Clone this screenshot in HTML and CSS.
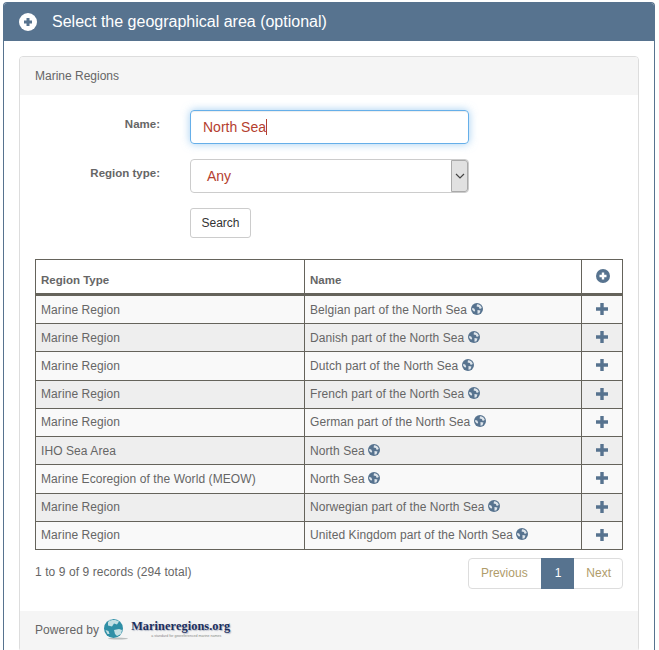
FILE: index.html
```html
<!DOCTYPE html>
<html lang="en">
<head>
  <meta charset="UTF-8" />
  <title>Select the geographical area</title>
  <link rel="stylesheet" href="styles.css">
</head>
<body>

<div class="panel">
  <div class="panel-title">
    <svg class="title-icon" viewBox="0 0 18 18"><circle cx="9" cy="9" r="9" fill="#fff"/><path d="M9 5v8M5 9h8" stroke="#57738f" stroke-width="3"/></svg>
    <span>Select the geographical area (optional)</span>
  </div>

  <div class="panel-body">
    <div class="card">
      <div class="card-heading">Marine Regions</div>

      <div class="card-body">
        <div class="form-row">
          <label class="form-label">Name:</label>
          <div class="fake-input focused">North Sea<span class="caret"></span></div>
        </div>
        <div class="form-row">
          <label class="form-label">Region type:</label>
          <div class="fake-select">
            <span class="select-value">Any</span>
            <span class="select-arrow">
              <svg viewBox="0 0 10 6" width="10" height="6"><path d="M1 1l4 4 4-4" fill="none" stroke="#444" stroke-width="1.2"/></svg>
            </span>
          </div>
        </div>
        <div class="form-row last">
          <span class="form-label"></span>
          <button class="btn">Search</button>
        </div>

        <table class="results">
          <thead>
            <tr>
              <th class="col-type">Region Type</th>
              <th class="col-name">Name</th>
              <th class="col-add">
                <svg class="add-all" viewBox="0 0 14 14"><circle cx="7" cy="7" r="7" fill="#57738f"/><path d="M7 3.5v7M3.5 7h7" stroke="#fff" stroke-width="2.4"/></svg>
              </th>
            </tr>
          </thead>
          <tbody id="rows"></tbody>
        </table>

        <div class="table-foot">
          <div class="records">1 to 9 of 9 records (294 total)</div>
          <div class="pager">
            <a class="page first">Previous</a>
            <a class="page active">1</a>
            <a class="page last">Next</a>
          </div>
        </div>
      </div>

      <div class="card-foot">
        <span>Powered by</span>
        <svg class="globe" viewBox="0 0 24 21">
          <ellipse cx="14" cy="19.6" rx="10" ry="1" fill="#b9bdbd"/>
          <circle cx="9.5" cy="9.5" r="9.5" fill="#2f8fa6"/>
          <path d="M4 3c3-2.4 8-2.6 11-.4l-2 3-3-1-2 3-4-1zM10 11l5-1 3 1-1 4-4 2-2-2zM1.500 11l3 1 1 3-2 0z" fill="#c4e0e4"/>
          <path d="M3 2.500a9.500 9.500 0 0 1 6.500-2.500c-3 1-5 2-6.500 2.500z" fill="#eaf5f6"/>
        </svg>
        <div class="logo">
          <span class="logo-name">Marineregions.org</span>
          <span class="logo-sub">a standard for georeferenced marine names</span>
        </div>
      </div>
    </div>
  </div>
</div>

<script>
  let regions = [
    ["Marine Region", "Belgian part of the North Sea"],
    ["Marine Region", "Danish part of the North Sea"],
    ["Marine Region", "Dutch part of the North Sea"],
    ["Marine Region", "French part of the North Sea"],
    ["Marine Region", "German part of the North Sea"],
    ["IHO Sea Area", "North Sea"],
    ["Marine Ecoregion of the World (MEOW)", "North Sea"],
    ["Marine Region", "Norwegian part of the North Sea"],
    ["Marine Region", "United Kingdom part of the North Sea"]
  ];

  let globe = '<svg class="globe-small" viewBox="0 0 12 12"><circle cx="6" cy="6" r="6" fill="#57738f"/><path d="M6 1.200c2.400 0 4.400 1.600 4.800 3.800L8.800 6 7.800 4 5.600 3.600zM6.500 7l3 .4-1 2.800-2 .6zM1.200 5l2 .6 1 2-1 1.200-2-2z" fill="#dfe6ec"/></svg>';
  let plus = '<svg class="plus" viewBox="0 0 12 12"><path d="M6 0v12M0 6h12" stroke="#57738f" stroke-width="3.4"/></svg>';

  let body = document.getElementById("rows");
  regions.forEach(r => {
    let row = body.insertRow();
    row.insertCell(0).innerText = r[0];
    row.insertCell(1).innerHTML = r[1] + " " + globe;
    let add = row.insertCell(2);
    add.className = "col-add";
    add.innerHTML = plus;
  });
</script>

</body>
</html>
```

FILE: styles.css
```css
html, body {
  height: 650px;
  overflow: hidden;
}

body {
  font-family: "Liberation Sans", Arial, sans-serif;
  margin: 0;
  padding: 2px 4px 0 3px;
  box-sizing: border-box;
  background-color: #fff;
  color: #666;
  font-size: 12px;
}

.panel {
  box-sizing: border-box;
  border: 1px solid #57738f;
  border-bottom: none;
  border-radius: 4px 4px 0 0;
  height: 648px;
  overflow: hidden;
  background: #fff;
}

.panel-title {
  display: flex;
  align-items: center;
  gap: 15px;
  height: 38px;
  padding-left: 15px;
  background-color: #57738f;
  color: #fff;
  font-size: 16px;
}

.title-icon {
  width: 18px;
  height: 18px;
}

.panel-body {
  padding: 15px;
}

.card {
  border: 1px solid #ddd;
  border-radius: 4px;
  background: #fff;
}

.card-heading {
  height: 38px;
  line-height: 38px;
  padding-left: 15px;
  background-color: #f5f5f5;
  border-radius: 3px 3px 0 0;
}

.card-body {
  padding: 15px 15px 22px;
}

.form-row {
  display: flex;
  align-items: flex-start;
  gap: 30px;
  margin-bottom: 15px;
}

.form-row.last {
  margin-bottom: 21px;
}

.form-label {
  width: 125px;
  padding-top: 8px;
  text-align: right;
  font-weight: bold;
  font-size: 11.5px;
}

.fake-input, .fake-select {
  box-sizing: border-box;
  width: 279px;
  height: 34px;
  border-radius: 4px;
  font-size: 14px;
  color: #b5402f;
}

.fake-input {
  display: flex;
  align-items: center;
  padding-left: 12px;
  border: 1px solid #66afe9;
  box-shadow: inset 0 1px 1px rgba(0,0,0,0.075), 0 0 8px rgba(102,175,233,0.6);
}

.caret {
  width: 1px;
  height: 16px;
  background: #b5402f;
}

.fake-select {
  display: flex;
  align-items: stretch;
  border: 1px solid #ccc;
}

.select-value {
  flex: 1;
  padding-left: 16px;
  line-height: 32px;
}

.select-arrow {
  display: flex;
  align-items: center;
  justify-content: center;
  width: 15px;
  background: #e1e1e1;
  border: 1px solid #aaa;
  border-radius: 0 3px 3px 0;
}

.btn {
  width: 61px;
  height: 30px;
  padding: 0;
  border: 1px solid #ccc;
  border-radius: 3px;
  background: #fff;
  color: #333;
  font-family: inherit;
  font-size: 12px;
}

.results {
  width: 588px;
  border-collapse: collapse;
  table-layout: fixed;
  border: 1px solid #65635b;
}

.results th, .results td {
  border: 1px solid #65635b;
  padding: 0 5px;
  text-align: left;
}

.results th {
  box-sizing: border-box;
  height: 35px;
  padding-top: 7px;
  border-bottom-width: 3px;
  font-weight: bold;
  font-size: 11.5px;
  background: #fff;
  vertical-align: middle;
}

.results td {
  height: 27.22px;
  letter-spacing: 0.08px;
  background: #f9f9f9;
}

.results tbody tr:nth-child(even) td {
  background: #eee;
}

.results .col-type {
  width: 269px;
}

.results .col-add {
  width: 41px;
  text-align: center;
}

.add-all {
  width: 14px;
  height: 14px;
  margin-left: 1px;
  margin-bottom: 9px;
  vertical-align: middle;
}

.globe-small {
  width: 12px;
  height: 12px;
  vertical-align: -1px;
}

.plus {
  width: 12px;
  height: 12px;
  margin-bottom: 2px;
  vertical-align: middle;
}

.table-foot {
  display: flex;
  justify-content: space-between;
  align-items: flex-start;
  margin-top: 8px;
}

.records {
  padding-top: 7px;
  letter-spacing: 0.08px;
}

.pager {
  display: flex;
  border: 1px solid #ddd;
  border-radius: 4px;
  height: 29px;
  line-height: 29px;
  color: #b09c6a;
}

.page {
  padding: 0 12px;
}

.page.first {
  padding-right: 13px;
}

.page.last {
  padding-right: 11px;
}

.page.active {
  background: #57738f;
  color: #fff;
  margin: -1px 0;
  height: 31px;
  line-height: 31px;
  padding: 0 13px 0 14px;
}

.card-foot {
  display: flex;
  align-items: center;
  height: 38px;
  padding-bottom: 2px;
  padding-left: 15px;
  background: #f5f5f5;
}

.card-foot span:first-child {
  letter-spacing: 0.08px;
}

.globe {
  width: 24px;
  height: 21px;
  margin-left: 5px;
}

.logo {
  display: flex;
  flex-direction: column;
  align-items: flex-end;
  margin-left: 3px;
}

.logo-name {
  font-family: "Liberation Serif", serif;
  font-weight: bold;
  font-size: 12.3px;
  line-height: 14px;
  color: #1c2f5e;
  text-shadow: 1px 1px 1px rgba(28,47,94,0.3);
}

.logo-sub {
  margin-right: 9px;
  font-size: 3.6px;
  line-height: 7px;
  color: #888;
}
```
